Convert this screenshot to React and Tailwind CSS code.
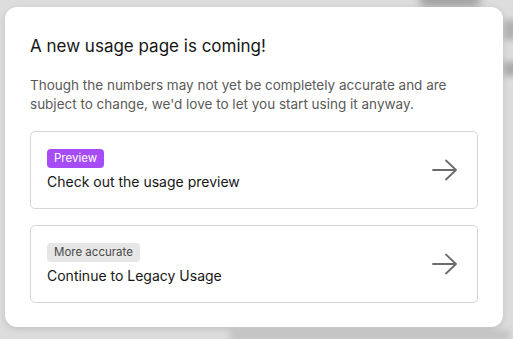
import React from "react";

function Arrow() {
  return (
    <svg width="25" height="22" viewBox="0 0 25 22" fill="none" className="shrink-0">
      <path d="M1 11H24M14 1.5L24 11L14 20.5" stroke="#6b6b6b" strokeWidth="1.8" strokeLinecap="round" strokeLinejoin="round" />
    </svg>
  );
}

function Option({ badge, badgeClass, label }) {
  return (
    <button className="w-full flex items-center justify-between rounded-[5px] border border-[#d6d6d6] bg-white pl-4 pr-[20px] py-[17px] text-left">
      <div className="flex flex-col items-start gap-[5px]">
        <span className={`rounded-[4px] px-[7px] py-[2px] text-[11.5px] leading-[15px] ${badgeClass}`}>{badge}</span>
        <span className="text-[14px] leading-[18px] text-[#161616]">{label}</span>
      </div>
      <Arrow />
    </button>
  );
}

export default function App() {
  return (
    <div className="relative w-[513px] h-[339px] overflow-hidden bg-[#dcdcdc]" style={{ fontFamily: "Inter, 'Noto Sans', sans-serif" }}>
      {/* blurred page behind */}
      <div className="absolute left-[420px] -top-[6px] w-[60px] h-[12px] rounded bg-[#9a9a9a] blur-[4px]" />
      <div className="absolute left-[504px] top-[20px] w-[14px] h-[20px] bg-[#b0b0b0] blur-[3px]" />
      <div className="absolute left-[504px] top-[62px] w-[14px] h-[14px] bg-[#a8a8a8] blur-[3px]" />
      <div className="absolute left-[230px] top-[330px] w-[280px] h-[12px] bg-[#c4c4c4] blur-[3px]" />

      <div className="relative mt-[7px] ml-[5px] w-[498px] h-[320px] rounded-[12px] bg-white px-[25px] pt-[28px] shadow-[0_2px_6px_rgba(0,0,0,0.12)]">
        <h2 className="text-[17px] leading-[22px] text-[#151515]">A new usage page is coming!</h2>
        <p className="mt-[19px] text-[13.5px] leading-[19px] text-[#5a5a5a]">
          Though the numbers may not yet be completely accurate and are subject to change, we'd love to let you start using it anyway.
        </p>
        <div className="mt-[17px] flex flex-col gap-4">
          <Option badge="Preview" badgeClass="bg-[#a64cf6] text-white" label="Check out the usage preview" />
          <Option badge="More accurate" badgeClass="bg-[#e6e6e6] text-[#4a4a4a]" label="Continue to Legacy Usage" />
        </div>
      </div>
    </div>
  );
}
